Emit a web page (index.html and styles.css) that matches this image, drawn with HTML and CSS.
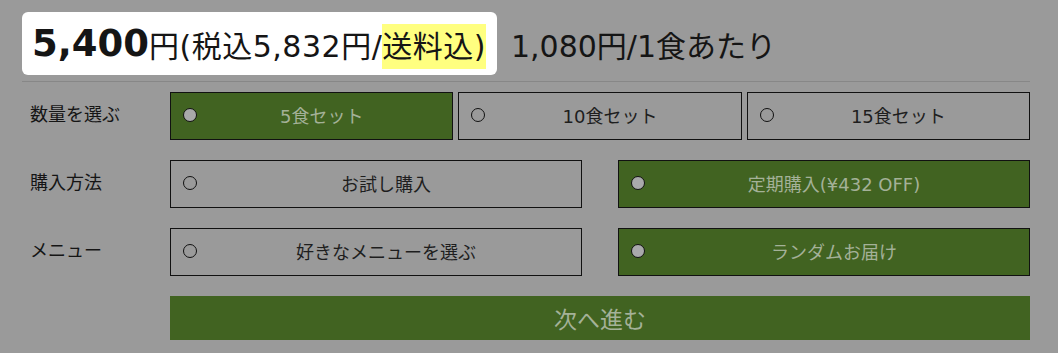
FILE: index.html
```html
<!DOCTYPE html>
<html lang="ja">
<head>
  <meta charset="UTF-8">
  <meta name="viewport" content="width=device-width, initial-scale=1.0">
  <title>購入オプション</title>
  <link rel="stylesheet" href="styles.css">
</head>
<body>

  <div class="purchase">
    <div class="price-head">
      <div class="price-box">
        <span class="price-main">5,400</span><span class="price-sub">円(税込5,832円/<span class="mark">送料込)</span></span>
      </div>
      <span class="per-meal">1,080円/1食あたり</span>
    </div>

    <div class="option-row">
      <span class="option-label">数量を選ぶ</span>
      <div class="choices three">
        <button class="choice selected"><span class="radio"></span>5食セット</button>
        <button class="choice"><span class="radio"></span>10食セット</button>
        <button class="choice"><span class="radio"></span>15食セット</button>
      </div>
    </div>

    <div class="option-row">
      <span class="option-label">購入方法</span>
      <div class="choices two">
        <button class="choice"><span class="radio"></span>お試し購入</button>
        <button class="choice selected"><span class="radio"></span>定期購入(¥432 OFF)</button>
      </div>
    </div>

    <div class="option-row">
      <span class="option-label">メニュー</span>
      <div class="choices two">
        <button class="choice"><span class="radio"></span>好きなメニューを選ぶ</button>
        <button class="choice selected"><span class="radio"></span>ランダムお届け</button>
      </div>
    </div>

    <div class="option-row">
      <span class="option-label"></span>
      <button class="next-btn">次へ進む</button>
    </div>
  </div>

</body>
</html>
```

FILE: styles.css
```css
body {
  margin: 0;
  background-color: #9a9a9a;
  font-family: "DejaVu Sans", "Noto Sans CJK JP", sans-serif;
  color: #151515;
}

.purchase {
  width: 1000px;
  padding: 12px 0 0 30px;
}

.price-head {
  display: flex;
  align-items: center;
  margin-left: -8px;
  padding-bottom: 6px;
  border-bottom: 1px solid #878787;
}

.price-box {
  display: flex;
  align-items: center;
  height: 63px;
  padding: 0 11px 0 10px;
  background-color: #ffffff;
  border-radius: 6px;
  white-space: nowrap;
}

.price-main {
  font-size: 37px;
  font-weight: bold;
}

.price-sub {
  font-size: 30px;
  letter-spacing: 0.5px;
}

.mark {
  padding: 5px 0;
  background-color: #ffff80;
}

.per-meal {
  margin-left: 14px;
  font-size: 30px;
}

.option-row {
  display: flex;
  align-items: center;
  margin-top: 20px;
}

.price-head + .option-row {
  margin-top: 10px;
}

.option-label {
  width: 140px;
  flex-shrink: 0;
  font-size: 18px;
  margin-top: -6px;
}

.choices {
  display: grid;
  width: 860px;
}

.choices.three {
  grid-template-columns: repeat(3, 1fr);
  gap: 5px;
}

.choices.two {
  grid-template-columns: repeat(2, 1fr);
  gap: 36px;
}

.choice {
  position: relative;
  height: 48px;
  padding: 0 0 3px 20px;
  border: 1.5px solid #111;
  background-color: transparent;
  font-family: inherit;
  font-size: 18px;
  color: #1e1e1e;
  text-align: center;
}

.choice.selected {
  background-color: #416321;
  color: #a4b198;
}

.radio {
  position: absolute;
  left: 12px;
  top: 15px;
  width: 12px;
  height: 12px;
  border: 1.5px solid #111;
  border-radius: 50%;
}

.choice.selected .radio {
  background-color: #a9a9ab;
}

.next-btn {
  width: 860px;
  height: 44px;
  border: none;
  background-color: #416321;
  color: #a4b198;
  font-family: inherit;
  font-size: 23px;
}
```
